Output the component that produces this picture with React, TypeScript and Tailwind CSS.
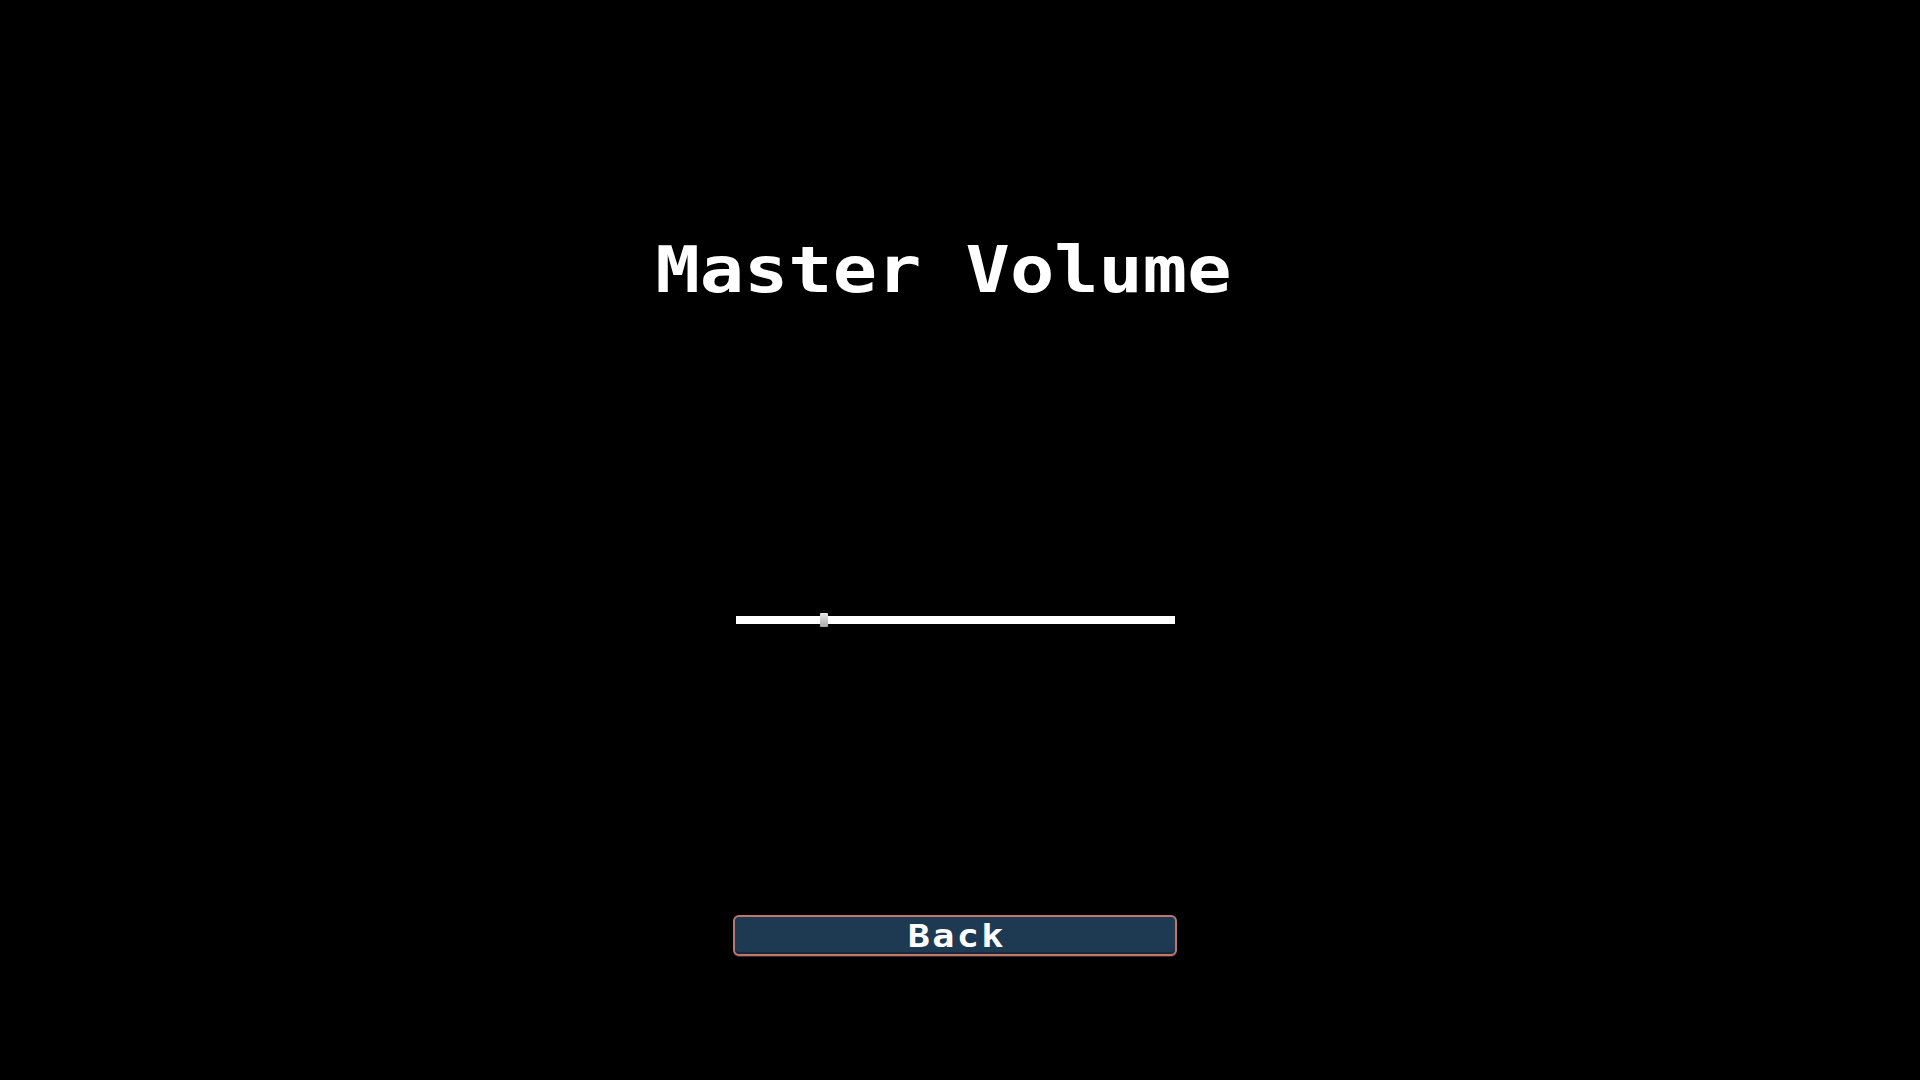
import React from 'react';

const pixelFont = { fontFamily: '"DejaVu Sans Mono", "Liberation Mono", monospace' };

export default function App() {
  return (
    <div className="w-full h-[1080px] bg-black overflow-hidden">
      <div className="w-[1910px] h-full flex flex-col items-center" style={pixelFont}>
        <h1 className="mt-[238px] mr-[24px] text-[64px] leading-none font-bold scale-x-[1.15] text-white">
          Master Volume
        </h1>

        <div className="mt-[311px] relative w-[439px] h-[14px] flex items-center">
          <div className="w-full h-2 bg-white" />
          <div className="absolute left-[84px] top-0 w-2 h-[14px] rounded-[1px] bg-gradient-to-b from-[#e6e6e6] to-[#a9a9a9]" />
        </div>

        <button className="mt-[288px] w-[444px] h-[41px] flex items-center justify-center rounded-[6px] border-2 border-[#bf766b] bg-[#1d3a52] shadow-[inset_0_-2px_0_#16293b,0_1px_0_#3a2230]">
          <span className="pl-[3px] text-[32px] leading-none font-bold tracking-[2px] scale-x-[1.15] text-white">Back</span>
        </button>
      </div>
    </div>
  );
}
